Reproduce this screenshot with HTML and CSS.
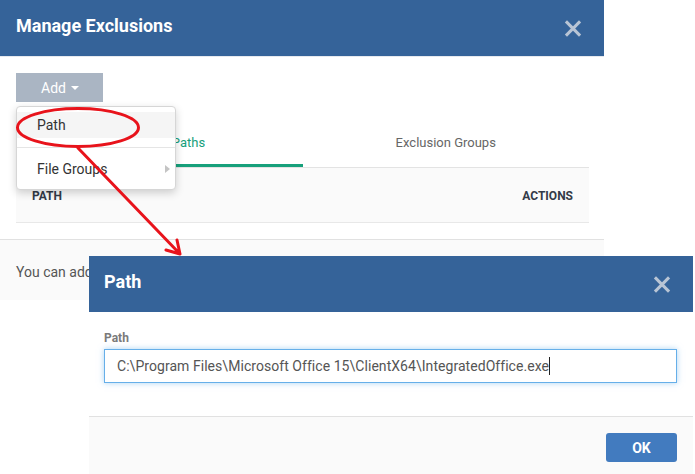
FILE: index.html
```html
<!doctype html>
<html lang="en">
  <head>
    <meta charset="UTF-8">
    <title>Manage Exclusions</title>
    <link rel="stylesheet" href="styles.css">
  </head>
  <body>
<section class="dialog manage">
  <header class="dlg-head">
    <h1>Manage Exclusions</h1>
    <span class="close"></span>
  </header>
  <div class="dlg-body">
    <button class="btn-add">Add <i class="caret"></i></button>
    <nav class="tabs">
      <a class="tab active">Exclusion Paths</a>
      <a class="tab">Exclusion Groups</a>
    </nav>
    <div class="thead">
      <span>PATH</span>
      <span>ACTIONS</span>
    </div>
  </div>
  <footer class="dlg-foot note"><span class="note-text">You can add</span></footer>
</section>

<ul class="menu">
  <li class="hover">Path</li>
  <li class="divider"></li>
  <li class="sub">File Groups</li>
</ul>

<section class="dialog path">
  <header class="dlg-head">
    <h1>Path</h1>
    <span class="close"></span>
  </header>
  <div class="dlg-body">
    <label class="field-label" for="path">Path</label>
    <div class="input" id="path">C:\Program Files\Microsoft Office 15\ClientX64\IntegratedOffice.exe<span class="cursor"></span></div>
  </div>
  <footer class="dlg-foot actions">
    <button class="btn-ok">OK</button>
  </footer>
</section>

<!-- red annotation drawn over the screenshot -->
<svg class="marks" width="695" height="474" viewBox="0 0 695 474">
  <ellipse cx="78" cy="127.5" rx="60.5" ry="19" fill="none" stroke="#e8131b" stroke-width="3"/>
  <path d="M78 148 L180 254 M180 254 L166 250 M180 254 L177 240" fill="none" stroke="#e8131b" stroke-width="3" stroke-linecap="round"/>
</svg>
  </body>
</html>
```

FILE: styles.css
```css
html, body {
  margin: 0;
  font-family: Roboto, "Liberation Sans", sans-serif;
  font-size: 14px;
  color: #555;
  background: #fff;
}
body {
  position: relative;
  width: 695px;
  height: 474px;
  overflow: hidden;
}
.dialog {
  position: absolute;
  width: 604px;
  background: #fff;
  display: flex;
  flex-direction: column;
}
.manage {
  left: 0;
  top: 0;
  height: 300px;
}
.path {
  left: 89px;
  top: 256px;
  height: 218px;
}
.dlg-head {
  height: 57px;
  box-sizing: border-box;
  background: #356399;
  border-bottom: 1px solid #e6e9ee;
  display: flex;
  align-items: center;
  justify-content: space-between;
  padding: 0 16px 0 16px;
}
.path .dlg-head {
  height: 56px;
  border-bottom: 0;
  padding-left: 15px;
}
.dlg-head h1 {
  margin: 0 0 5px;
  font-size: 18px;
  font-weight: 700;
  color: #fff;
}
.close {
  position: relative;
  width: 16px;
  height: 16px;
  margin-right: 7px;
}
.close::before, .close::after {
  content: '';
  position: absolute;
  left: -2px;
  top: 6.5px;
  width: 20px;
  height: 3px;
  background: #b9c5d5;
  transform: rotate(45deg);
}
.close::after {
  transform: rotate(-45deg);
}
.dlg-body {
  padding: 16px 15px 16px 16px;
}
.btn-add {
  display: flex;
  align-items: center;
  gap: 5px;
  width: 87px;
  height: 29px;
  padding: 0 0 0 25px;
  border: 0;
  background: #aab5c3;
  color: #fff;
  font: 14px Roboto, sans-serif;
}
.caret {
  width: 0;
  height: 0;
  border-left: 4px solid transparent;
  border-right: 4px solid transparent;
  border-top: 4px solid #fff;
}
.tabs {
  display: flex;
  margin-top: 17px;
  border-bottom: 1px solid #e3e3e3;
}
.tab {
  flex: 1 1 0;
  height: 48px;
  box-sizing: border-box;
  border-bottom: 3px solid transparent;
  display: flex;
  align-items: center;
  justify-content: center;
  padding-top: 2px;
  font-size: 13px;
  color: #666;
}
.tab.active {
  color: #17a07b;
  border-bottom-color: #17a07b;
}
.thead {
  height: 55px;
  box-sizing: border-box;
  background: #fafafa;
  border-bottom: 1px solid #e8e8e8;
  display: flex;
  align-items: center;
  justify-content: space-between;
  padding: 2px 16px 0;
  font-size: 12px;
  font-weight: 700;
  color: #333a48;
}
.dlg-foot {
  flex: 1;
  background: #fafafa;
  border-top: 1px solid #e1e1e1;
}
.note {
  display: flex;
  align-items: center;
  padding: 3px 16px 0;
  font-size: 14px;
  color: #555;
  white-space: nowrap;
}
.menu {
  position: absolute;
  left: 16px;
  top: 106px;
  width: 160px;
  box-sizing: border-box;
  margin: 0;
  padding: 5px 0 7px;
  list-style: none;
  background: #fff;
  border: 1px solid #d6d6d6;
  border-radius: 4px;
  box-shadow: 0 3px 8px rgba(0, 0, 0, 0.18);
}
.menu li {
  height: 26px;
  display: flex;
  align-items: center;
  padding: 0 20px 1px;
  box-sizing: border-box;
  color: #333;
}
.menu .hover {
  background: #f5f5f5;
}
.menu .divider {
  height: 1px;
  padding: 0;
  margin: 9px 0 8px;
  background: #e5e5e5;
}
.menu .sub {
  position: relative;
}
.menu .sub::after {
  content: '';
  position: absolute;
  right: 5px;
  top: 9px;
  border-top: 4.5px solid transparent;
  border-bottom: 4.5px solid transparent;
  border-left: 5px solid #c4c4c4;
}
.path .dlg-body {
  padding: 19px 16px 33px 15px;
}
.field-label {
  display: block;
  font-size: 12px;
  font-weight: 700;
  color: #7a7a7a;
  margin-bottom: 4px;
}
.input {
  height: 34px;
  box-sizing: border-box;
  border: 1px solid #66afe9;
  box-shadow: 0 0 6px rgba(102, 175, 233, 0.55);
  display: flex;
  align-items: center;
  padding: 0 12px;
  font-size: 14px;
  letter-spacing: 0.05px;
  color: #555;
  white-space: nowrap;
}
.cursor {
  width: 1px;
  height: 18px;
  background: #222;
}
.actions {
  display: flex;
  justify-content: flex-end;
  align-items: flex-start;
  padding: 16px 16px 0;
}
.btn-ok {
  width: 71px;
  height: 29px;
  border: 0;
  border-radius: 3px;
  background: #427bbf;
  color: #fff;
  font: 700 14px Roboto, sans-serif;
}
.marks {
  position: absolute;
  left: 0;
  top: 0;
}
```
